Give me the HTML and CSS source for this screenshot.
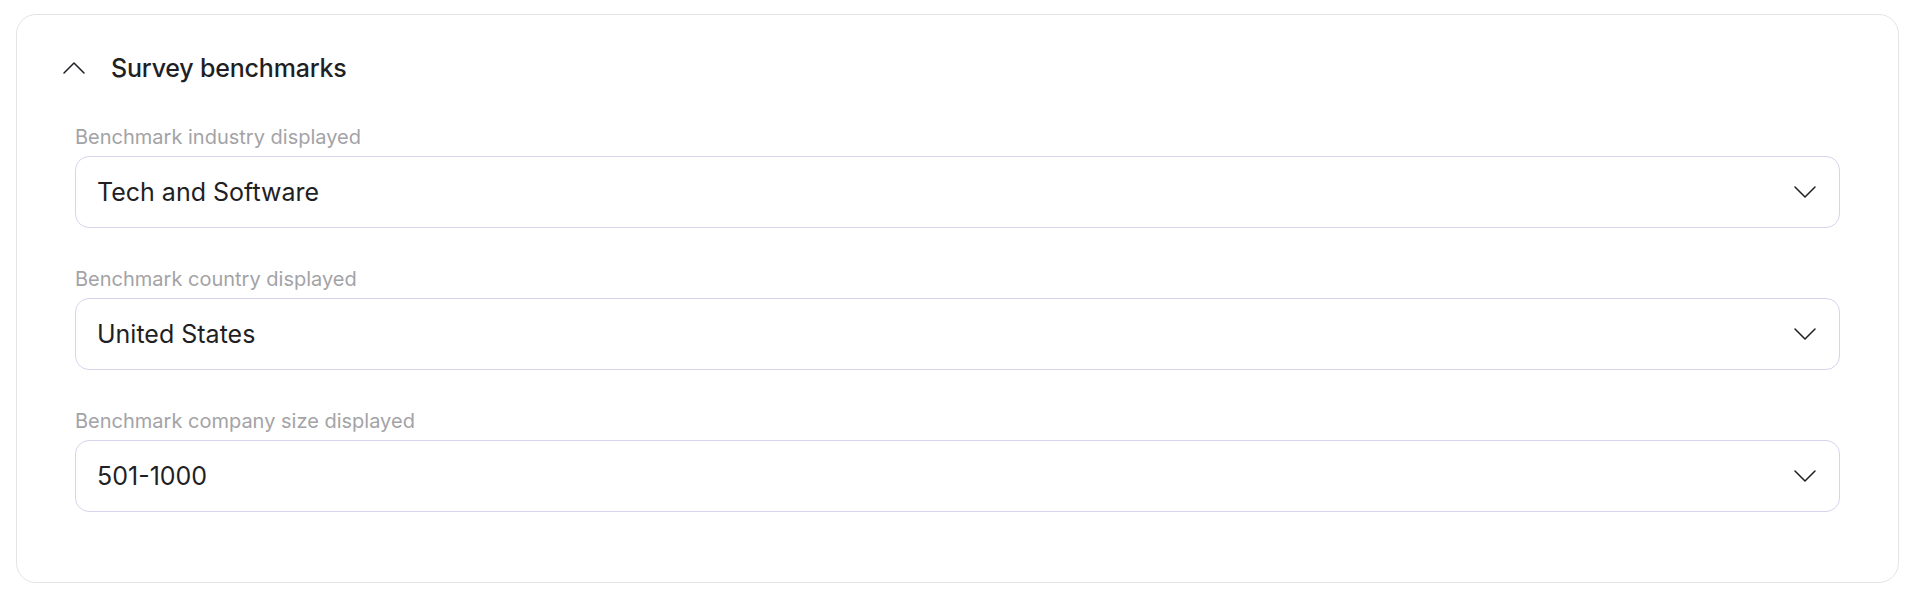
FILE: index.html
```html
<!DOCTYPE html>
<html lang="en">
<head>
<meta charset="utf-8">
<title>Survey benchmarks</title>
<link rel="stylesheet" href="styles.css">
</head>
<body>
<section class="card">
  <div class="card-header">
    <svg class="chev-up" width="24" height="24" viewBox="0 0 24 24" fill="none"><path d="M2 17 L12 7 L22 17" stroke="#1f1f24" stroke-width="1.5" stroke-linecap="round" stroke-linejoin="round"/></svg>
    <h2 class="title">Survey benchmarks</h2>
  </div>
  <div class="fields">
    <div class="field">
      <div class="label">Benchmark industry displayed</div>
      <div class="select">
        <span class="value">Tech and Software</span>
        <svg class="chev-down" width="24" height="24" viewBox="0 0 24 24" fill="none"><path d="M2 7 L12 17 L22 7" stroke="#1f1f24" stroke-width="1.5" stroke-linecap="round" stroke-linejoin="round"/></svg>
      </div>
    </div>
    <div class="field">
      <div class="label">Benchmark country displayed</div>
      <div class="select">
        <span class="value">United States</span>
        <svg class="chev-down" width="24" height="24" viewBox="0 0 24 24" fill="none"><path d="M2 7 L12 17 L22 7" stroke="#1f1f24" stroke-width="1.5" stroke-linecap="round" stroke-linejoin="round"/></svg>
      </div>
    </div>
    <div class="field">
      <div class="label">Benchmark company size displayed</div>
      <div class="select">
        <span class="value">501-1000</span>
        <svg class="chev-down" width="24" height="24" viewBox="0 0 24 24" fill="none"><path d="M2 7 L12 17 L22 7" stroke="#1f1f24" stroke-width="1.5" stroke-linecap="round" stroke-linejoin="round"/></svg>
      </div>
    </div>
  </div>
</section>
</body>
</html>
```

FILE: styles.css
```css
* { box-sizing: border-box; }
html, body { margin: 0; padding: 0; background: #ffffff; }
body {
  font-family: Inter, "Noto Sans", "Liberation Sans", sans-serif;
  color: #1f1f24;
}
.card {
  margin: 14px 11px 0 16px;
  border: 1px solid #e4e4e8;
  border-radius: 20px;
  padding: 37px 58px 70px 58px;
}
.card-header {
  display: flex;
  align-items: center;
  height: 32px;
  margin-left: -13px;
  gap: 25px;
}
.chev-up { display: block; flex: none; }
.title {
  margin: 0;
  font-size: 25px;
  line-height: 32px;
  font-weight: 500;
  letter-spacing: -0.2px;
}
.fields {
  display: flex;
  flex-direction: column;
  gap: 39px;
  margin-top: 41px;
}
.field {
  display: flex;
  flex-direction: column;
  gap: 7px;
}
.label {
  font-size: 20px;
  line-height: 24px;
  color: #a3a3a6;
}
.select {
  height: 72px;
  border: 1px solid #d6d4ec;
  border-radius: 14px;
  display: flex;
  align-items: center;
  justify-content: space-between;
  padding: 0 22px 0 21px;
}
.value {
  font-size: 25px;
  color: #1f1f24;
}
.chev-down { display: block; flex: none; }
```
